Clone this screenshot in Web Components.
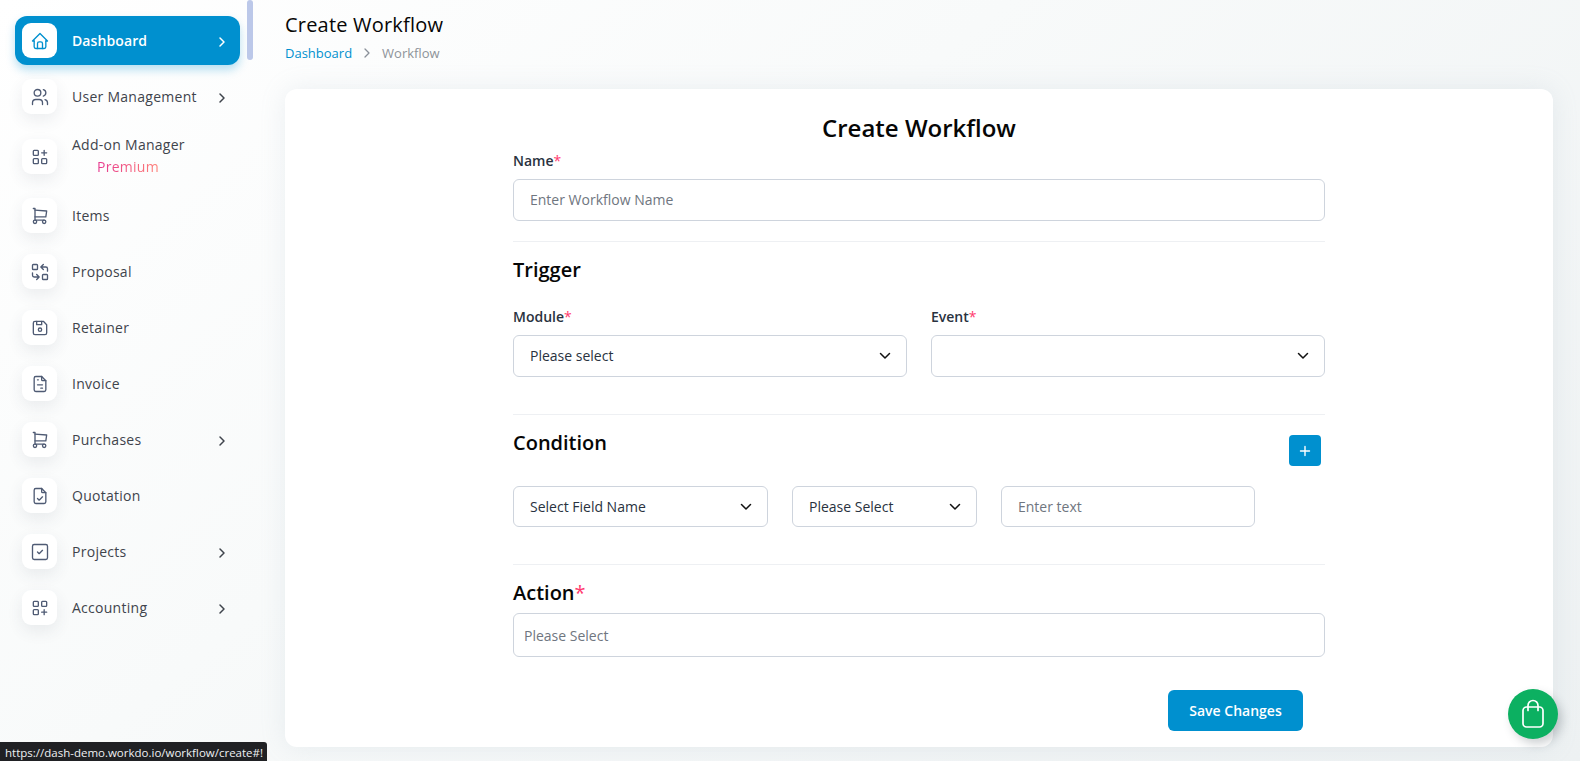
<!DOCTYPE html>
<html><head><meta charset="utf-8"><title>Create Workflow</title>
<style>
html,body{margin:0;height:761px;overflow:hidden}
body{font-family:"Open Sans",sans-serif;background:linear-gradient(141deg,#ffffff 0%,#f8fafa 40%,#edf1f2 100%)}
</style></head><body>
<app-shell>
  <side-nav slot="nav">
    <nav-item icon="home" active arrow>Dashboard</nav-item>
    <nav-item icon="users" arrow>User Management</nav-item>
    <nav-item icon="addon" tall>Add-on Manager<premium-tag slot="sub">Premium</premium-tag></nav-item>
    <nav-item icon="cart">Items</nav-item>
    <nav-item icon="replace">Proposal</nav-item>
    <nav-item icon="floppy">Retainer</nav-item>
    <nav-item icon="invoice">Invoice</nav-item>
    <nav-item icon="cart" arrow>Purchases</nav-item>
    <nav-item icon="filecheck">Quotation</nav-item>
    <nav-item icon="square" arrow>Projects</nav-item>
    <nav-item icon="grid" arrow>Accounting</nav-item>
  </side-nav>
  <page-header slot="head" title-text="Create Workflow" crumb="Dashboard" current="Workflow"></page-header>
  <form-card slot="card">
    <h-title>Create Workflow</h-title>
    <field-label style="--mb:8px">Name<req-star></req-star></field-label>
    <text-box placeholder="Enter Workflow Name"></text-box>
    <h-rule style="--mt:20px;--mb:16px"></h-rule>
    <section-head>Trigger</section-head>
    <two-col style="margin-top:25px">
      <div><field-label style="--mb:8px">Module<req-star></req-star></field-label><select-box value="Please select"></select-box></div>
      <div><field-label style="--mb:8px">Event<req-star></req-star></field-label><select-box value=""></select-box></div>
    </two-col>
    <h-rule style="--mt:37px;--mb:15px"></h-rule>
    <cond-head>Condition<add-button slot="action"></add-button></cond-head>
    <cond-row>
      <select-box style="width:255px" value="Select Field Name" compact></select-box>
      <select-box style="width:185px" value="Please Select" compact></select-box>
      <text-box style="width:254px" placeholder="Enter text" compact></text-box>
    </cond-row>
    <h-rule style="--mt:37px;--mb:16px"></h-rule>
    <section-head large>Action<req-star></req-star></section-head>
    <text-box style="margin-top:8px" placeholder="Please Select" action></text-box>
    <form-actions><save-button>Save Changes</save-button></form-actions>
  </form-card>
  <status-tip slot="overlay">https://dash-demo.workdo.io/workflow/create#!</status-tip>
  <cart-fab slot="overlay"></cart-fab>
</app-shell>
<script>
const def=(name,css,html)=>{
  customElements.define(name,class extends HTMLElement{
    constructor(){super();const r=this.attachShadow({mode:"open"});r.innerHTML=`<style>${css}</style>${typeof html==="function"?"":html}`;}
    connectedCallback(){if(typeof html==="function"&&!this._d){this._d=1;this.shadowRoot.innerHTML+=html(this);}}
  });
};
const I={
 home:'<path d="M5 12H3l9-9 9 9h-2"/><path d="M5 12v7a2 2 0 0 0 2 2h10a2 2 0 0 0 2-2v-7"/><path d="M9 21v-6a2 2 0 0 1 2-2h2a2 2 0 0 1 2 2v6"/>',
 users:'<circle cx="9" cy="7" r="4"/><path d="M3 21v-2a4 4 0 0 1 4-4h4a4 4 0 0 1 4 4v2"/><path d="M16 3.13a4 4 0 0 1 0 7.75"/><path d="M21 21v-2a4 4 0 0 0-3-3.85"/>',
 addon:'<rect x="4" y="4" width="6" height="6" rx="1"/><rect x="4" y="14" width="6" height="6" rx="1"/><rect x="14" y="14" width="6" height="6" rx="1"/><path d="M14 7h6M17 4v6"/>',
 grid:'<rect x="4" y="4" width="6" height="6" rx="1"/><rect x="14" y="4" width="6" height="6" rx="1"/><rect x="4" y="14" width="6" height="6" rx="1"/><path d="M14 17h6M17 14v6"/>',
 cart:'<circle cx="6" cy="19" r="2"/><circle cx="17" cy="19" r="2"/><path d="M17 17H6V3H4"/><path d="M6 5l14 1-1 7H6"/>',
 replace:'<rect x="3" y="3" width="6" height="6" rx="1"/><rect x="15" y="15" width="6" height="6" rx="1"/><path d="M21 11V8a2 2 0 0 0-2-2h-6l3 3m0-6-3 3"/><path d="M3 13v3a2 2 0 0 0 2 2h6l-3-3m0 6 3-3"/>',
 floppy:'<path d="M6 4h10l4 4v10a2 2 0 0 1-2 2H6a2 2 0 0 1-2-2V6a2 2 0 0 1 2-2"/><circle cx="12" cy="14" r="2"/><path d="M14 4v4H8V4"/>',
 invoice:'<path d="M14 3v4a1 1 0 0 0 1 1h4"/><path d="M17 21H7a2 2 0 0 1-2-2V5a2 2 0 0 1 2-2h7l5 5v11a2 2 0 0 1-2 2"/><path d="M9 7h1M9 13h6M13 17h2"/>',
 filecheck:'<path d="M14 3v4a1 1 0 0 0 1 1h4"/><path d="M17 21H7a2 2 0 0 1-2-2V5a2 2 0 0 1 2-2h7l5 5v11a2 2 0 0 1-2 2z"/><path d="M9 15l2 2 4-4"/>',
 square:'<rect x="3" y="3" width="18" height="18" rx="2"/><path d="M9 12l2 2 4-4"/>'
};
const svg=(n,s)=>`<svg width="${s}" height="${s}" viewBox="0 0 24 24" fill="none" stroke="currentColor" stroke-width="1.6" stroke-linecap="round" stroke-linejoin="round">${I[n]}</svg>`;

def("app-shell",`
 :host{display:grid;grid-template-columns:285px 1268px;height:761px;grid-template-rows:89px 658px}
 .nav{grid-row:1/3;position:relative;overflow:hidden;height:644px}
 .nav::after{content:"";position:absolute;left:247px;top:0;width:6px;height:60px;border-radius:3px;background:#bcc8e9}
`,`<div class="nav"><slot name="nav"></slot></div><div><slot name="head"></slot></div><div><slot name="card"></slot></div><slot name="overlay"></slot>`);

def("side-nav",`:host{display:flex;flex-direction:column;padding:16px 0 0 15px;width:225px}`,`<slot></slot>`);

def("nav-item",`
 :host{display:flex;align-items:center;height:49px;margin-bottom:7px;padding-left:7px;padding-right:13px;box-sizing:border-box;border-radius:12px;color:#3f444c;font-size:14px;font-weight:500;letter-spacing:.27px}
 :host([tall]){margin:4px 0 10px;height:49px}
 :host([tall]) .t{margin-top:-2px}
 :host([active]){background:#0090cf;color:#fff;font-weight:600;letter-spacing:.1px;box-shadow:0 5px 10px rgba(0,144,207,.28)}
 .ic{flex:none;width:35px;height:35px;border-radius:9px;background:#fff;display:flex;align-items:center;justify-content:center;color:#4f5b74;box-shadow:0 6px 16px rgba(60,70,90,.09)}
 :host([active]) .ic{color:#0090cf;box-shadow:none}
 .t{flex:1;margin-left:15px;line-height:20px;white-space:nowrap}
 ::slotted([slot=sub]){display:block;margin-left:25px;margin-top:2px}
 .a{flex:none;width:10px;height:12px;display:flex;color:inherit;margin-top:2px}
`,el=>`<span class="ic">${svg(el.getAttribute("icon"),20)}</span><span class="t"><slot></slot><slot name="sub"></slot></span>${el.hasAttribute("arrow")?'<span class="a"><svg width="10" height="12" viewBox="0 0 10 12" fill="none" stroke="currentColor" stroke-width="1.5" stroke-linecap="round" stroke-linejoin="round"><path d="M3 2l4 4-4 4"/></svg></span>':""}`);

def("premium-tag",`:host{display:block;font-weight:500}
 span{background:linear-gradient(90deg,#e6378f,#ff8177);-webkit-background-clip:text;background-clip:text;color:transparent}`,`<span><slot></slot></span>`);

def("page-header",`:host{display:block;padding-top:13px}
 h1{margin:0;font-size:20px;letter-spacing:.2px;line-height:24px;font-weight:500;color:#060606}
 nav{display:flex;align-items:center;margin-top:7px;font-size:13px;line-height:18px}
 a{color:#0090cf}
 svg{margin:0 11px 0 11px;color:#8a9099}
 b{font-weight:400;color:#8d9399}`,el=>`<h1>${el.getAttribute("title-text")}</h1><nav><a>${el.getAttribute("crumb")}</a><svg width="8" height="10" viewBox="0 0 8 10" fill="none" stroke="currentColor" stroke-width="1.3" stroke-linecap="round" stroke-linejoin="round"><path d="M2 1l4 4-4 4"/></svg><b>${el.getAttribute("current")}</b></nav>`);

def("form-card",`:host{display:block;width:1268px;height:658px;box-sizing:border-box;background:#fff;border-radius:12px;padding:22px 228px 0 228px;box-shadow:0 0 26px rgba(150,165,185,.16)}`,`<slot></slot>`);

def("h-title",`:host{display:block;text-align:center;font-size:24px;line-height:34px;font-weight:600;color:#060606;margin-bottom:6px}`,`<slot></slot>`);
def("field-label",`:host{display:block;font-size:14px;line-height:20px;font-weight:600;color:#293240;margin-bottom:var(--mb,8px)}`,`<slot></slot>`);
def("req-star",`:host{color:#ff3a6e;font-weight:400}`,`*`);
def("h-rule",`:host{display:block;height:1px;background:#eef0f3;margin-top:var(--mt);margin-bottom:var(--mb)}`,``);
def("section-head",`:host{display:block;font-size:20px;line-height:24px;font-weight:600;color:#060606}`,`<slot></slot>`);
def("two-col",`:host{display:grid;grid-template-columns:394px 394px;gap:24px}`,`<slot></slot>`);
def("cond-head",`:host{display:flex;justify-content:space-between;align-items:flex-start;font-size:20px;line-height:26px;font-weight:600;color:#060606;padding-right:4px;height:56px}
 ::slotted(add-button){margin-top:5px}`,`<span><slot></slot></span><slot name="action"></slot>`);
def("cond-row",`:host{display:flex;gap:24px}`,`<slot></slot>`);
def("form-actions",`:host{display:flex;justify-content:flex-end;padding-right:22px;margin-top:33px}`,`<slot></slot>`);

def("text-box",`:host{display:flex;box-sizing:border-box;height:42px;border:1px solid #ced4dd;border-radius:6px;background:#fff;font-size:14px;color:#6f7680;align-items:center;padding:0 16px}
 span{padding-bottom:2px}
 :host([compact]) span,:host([action]) span{padding-bottom:0}
 :host([compact]){height:41px}
 :host([action]){height:44px;padding:0 10px}`,el=>`<span>${el.getAttribute("placeholder")}</span>`);
def("select-box",`:host{display:flex;box-sizing:border-box;height:42px;border:1px solid #ced4dd;border-radius:6px;background:#fff;font-size:14px;color:#293240;align-items:center;justify-content:space-between;padding:0 14px 0 16px}
 span{padding-bottom:2px}
 :host([compact]) span{padding-bottom:0}
 :host([compact]){height:41px}`,el=>`<span>${el.getAttribute("value")}</span><svg width="14" height="10" viewBox="0 0 14 10" fill="none" stroke="#111" stroke-width="1.5" stroke-linecap="round" stroke-linejoin="round"><path d="M2.5 2.5 7 7l4.5-4.5"/></svg>`);

def("add-button",`:host{display:flex;width:32px;height:31px;background:#0090cf;border-radius:4px;align-items:center;justify-content:center}`,`<svg width="12" height="12" viewBox="0 0 12 12" fill="none" stroke="#fff" stroke-width="1.4" stroke-linecap="round"><path d="M6 1.5v9M1.5 6h9"/></svg>`);
def("save-button",`:host{display:flex;width:135px;height:41px;background:#0090cf;border-radius:6px;color:#fff;font-size:14px;font-weight:600;align-items:center;justify-content:center}`,`<slot></slot>`);
def("status-tip",`:host{position:fixed;left:0;bottom:0;height:19px;width:267px;box-sizing:border-box;background:#202124;color:#eef0f2;border-radius:0 3px 0 0;font:11.5px/22px "Open Sans",sans-serif;padding-left:5px;white-space:nowrap;overflow:hidden}`,`<slot></slot>`);
def("cart-fab",`:host{position:fixed;left:1508px;top:689px;width:50px;height:50px;border-radius:50%;background:#0cb061;display:flex;align-items:center;justify-content:center;box-shadow:4px 5px 10px rgba(60,70,80,.25)}`,`<svg width="26" height="30" viewBox="0 0 26 30" fill="none" stroke="#fff" stroke-width="1.7" stroke-linecap="round" stroke-linejoin="round"><rect x="3" y="8" width="20" height="20" rx="3.5"/><path d="M8 11.5V6.5a5 5 0 0 1 10 0v5"/></svg>`);
</script>
</body></html>
